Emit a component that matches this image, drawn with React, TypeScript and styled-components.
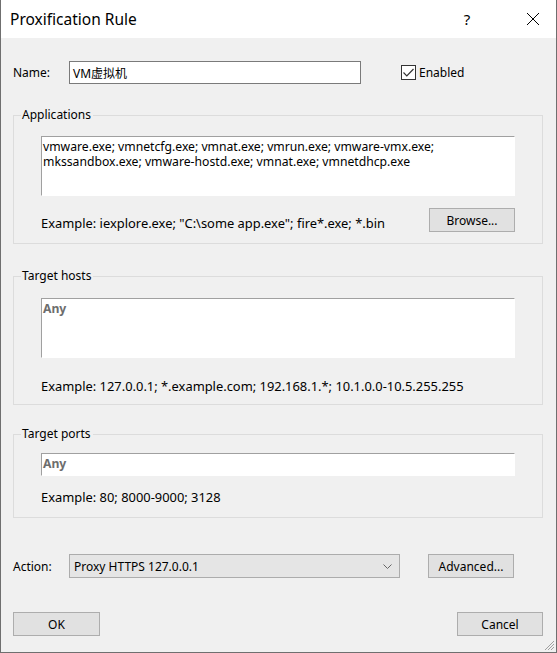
import React from "react";
import styled, { createGlobalStyle } from "styled-components";

const Global = createGlobalStyle`
  html, body { margin: 0; padding: 0; background: #f0f0f0; }
  body { font-family: "Noto Sans", "Noto Sans CJK SC", sans-serif; font-size: 12px; color: #000; }
  * { box-sizing: border-box; }
`;

const Window = styled.div`
  position: relative;
  width: 557px;
  height: 653px;
  background: #f0f0f0;
  border: 1px solid #6f6f6f;
  border-top: none;
  display: flex;
  flex-direction: column;
`;

const TitleBar = styled.div`
  height: 38px;
  background: #fff;
  display: flex;
  align-items: center;
  padding-left: 9px;
`;

const Title = styled.div`
  flex: 1;
  font-size: 15.5px;
  line-height: 20px;
  margin-top: -1px;
`;

const TitleButton = styled.div<{ $mr?: number }>`
  width: 46px;
  height: 38px;
  margin-right: ${(p) => p.$mr ?? 0}px;
  display: flex;
  align-items: center;
  justify-content: center;
  font-size: 15px;
`;

const Content = styled.div`
  flex: 1;
  display: flex;
  flex-direction: column;
  padding: 23px 13px 0 12px;
`;

const Row = styled.div<{ $mt?: number }>`
  display: flex;
  align-items: center;
  margin-top: ${(p) => p.$mt ?? 0}px;
`;

const Label = styled.div`
  width: 56px;
  line-height: 15px;
`;

const TextInput = styled.div<{ $w: number }>`
  width: ${(p) => p.$w}px;
  height: 23px;
  background: #fff;
  border: 1px solid #7a7a7a;
  padding: 0 3px;
  display: flex;
  align-items: center;
  font-size: 12px;
`;

const Check = styled.div`
  width: 15px;
  height: 15px;
  border: 1px solid #333;
  background: #fff;
  margin-left: 40px;
  display: flex;
  align-items: center;
  justify-content: center;
`;

const CheckLabel = styled.div`
  margin-left: 3px;
`;

const Group = styled.fieldset<{ $mt: number; $pb: number }>`
  margin: ${(p) => p.$mt}px 0 0 0;
  padding: 0 27px ${(p) => p.$pb}px 27px;
  border: 1px solid #dcdcdc;
  min-width: 0;
`;

const Legend = styled.legend`
  margin-left: -20px;
  padding: 0 2px 0 1px;
  line-height: 16px;
`;

const Area = styled.div<{ $h: number; $mt: number }>`
  height: ${(p) => p.$h}px;
  margin-top: ${(p) => p.$mt}px;
  background: #fff;
  border-style: solid;
  border-width: 1px;
  border-color: #a0a0a0 #fff #fff #a0a0a0;
  padding: 2px 1px;
  font-size: 12.2px;
  line-height: 15px;
  white-space: pre-wrap;
`;

const Placeholder = styled.span`
  font-weight: bold;
  color: #6d6d6d;
`;

const ExampleRow = styled.div<{ $mt: number }>`
  display: flex;
  align-items: flex-end;
  justify-content: space-between;
  margin-top: ${(p) => p.$mt}px;
`;

const Example = styled.div`
  font-size: 12.9px;
  line-height: 15px;
  margin-bottom: 1px;
`;

const Button = styled.div<{ $w: number; $mr?: number }>`
  width: ${(p) => p.$w}px;
  height: 24px;
  margin-right: ${(p) => p.$mr ?? 0}px;
  background: #e1e1e1;
  border: 1px solid #adadad;
  display: flex;
  align-items: center;
  justify-content: center;
`;

const Select = styled.div`
  width: 331px;
  height: 24px;
  background: #e5e5e5;
  border: 1px solid #acacac;
  display: flex;
  align-items: center;
  padding: 0 7px 0 4px;
`;

const SelectText = styled.div`
  flex: 1;
`;

const Spacer = styled.div`
  flex: 1;
`;

const Grip = styled.svg`
  position: absolute;
  right: 1px;
  bottom: 1px;
`;

export default function App() {
  return (
    <>
      <Global />
      <Window>
        <TitleBar>
          <Title>Proxification Rule</Title>
          <TitleButton $mr={20}>?</TitleButton>
          <TitleButton>
            <svg width="14" height="14" viewBox="0 0 14 14">
              <path d="M1 1 L13 13 M13 1 L1 13" stroke="#000" strokeWidth="1" />
            </svg>
          </TitleButton>
        </TitleBar>
        <Content>
          <Row>
            <Label>Name:</Label>
            <TextInput $w={292}>VM虚拟机</TextInput>
            <Check>
              <svg width="11" height="9" viewBox="0 0 11 9">
                <path d="M0.5 4.5 L3.8 7.8 L10.5 1" stroke="#333" strokeWidth="1.2" fill="none" />
              </svg>
            </Check>
            <CheckLabel>Enabled</CheckLabel>
          </Row>

          <Group $mt={23} $pb={11}>
            <Legend>Applications</Legend>
            <Area $h={60} $mt={13}>
              vmware.exe; vmnetcfg.exe; vmnat.exe; vmrun.exe; vmware-vmx.exe;
              {"\n"}mkssandbox.exe; vmware-hostd.exe; vmnat.exe; vmnetdhcp.exe
            </Area>
            <ExampleRow $mt={12}>
              <Example>Example: iexplore.exe; "C:\some app.exe"; fire*.exe; *.bin</Example>
              <Button $w={86}>Browse...</Button>
            </ExampleRow>
          </Group>

          <Group $mt={24} $pb={9}>
            <Legend>Target hosts</Legend>
            <Area $h={60} $mt={14}>
              <Placeholder>Any</Placeholder>
            </Area>
            <ExampleRow $mt={21}>
              <Example>Example: 127.0.0.1; *.example.com; 192.168.1.*; 10.1.0.0-10.5.255.255</Example>
            </ExampleRow>
          </Group>

          <Group $mt={21} $pb={11}>
            <Legend>Target ports</Legend>
            <Area $h={23} $mt={11}>
              <Placeholder>Any</Placeholder>
            </Area>
            <ExampleRow $mt={14}>
              <Example>Example: 80; 8000-9000; 3128</Example>
            </ExampleRow>
          </Group>

          <Row $mt={36}>
            <Label>Action:</Label>
            <Select>
              <SelectText>Proxy HTTPS 127.0.0.1</SelectText>
              <svg width="9" height="5" viewBox="0 0 9 5">
                <path d="M0.5 0.5 L4.5 4.5 L8.5 0.5" stroke="#666" strokeWidth="1" fill="none" />
              </svg>
            </Select>
            <Spacer />
            <Button $w={86} $mr={29}>Advanced...</Button>
          </Row>

          <Row $mt={34}>
            <Button $w={87}>OK</Button>
            <Spacer />
            <Button $w={86}>Cancel</Button>
          </Row>
        </Content>
        <Grip width="12" height="12" viewBox="0 0 12 12">
          <path d="M11 2 L2 11 M11 5 L5 11 M11 8 L8 11" stroke="#a0a0a0" strokeWidth="1" />
        </Grip>
      </Window>
    </>
  );
}
